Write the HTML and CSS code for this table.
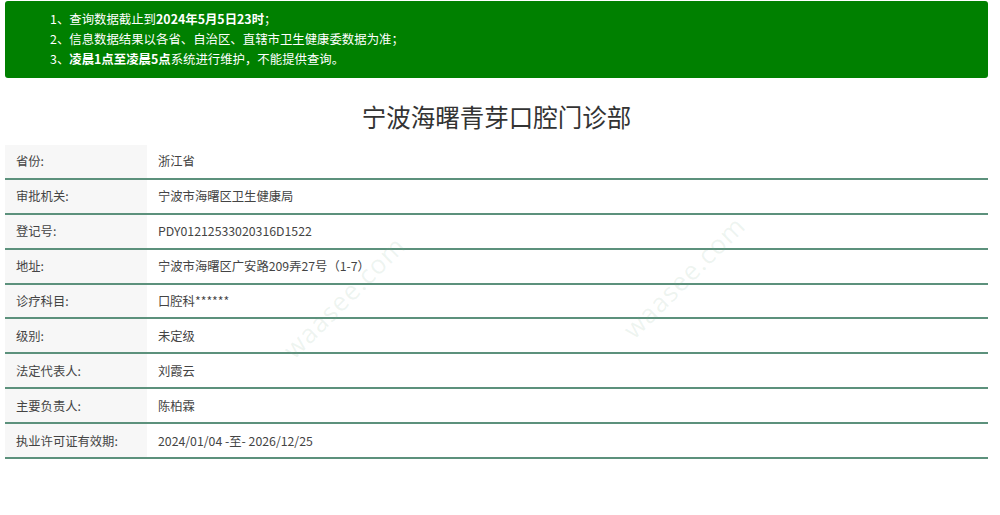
FILE: index.html
```html
<!DOCTYPE html>
<html lang="zh-CN">
<head>
<meta charset="utf-8">
<title>宁波海曙青芽口腔门诊部</title>
<link rel="stylesheet" href="styles.css">
</head>
<body>
<div class="page">
  <div class="notice">
    <p>1、查询数据截止到<b>2024年5月5日23时</b>；</p>
    <p>2、信息数据结果以各省、自治区、直辖市卫生健康委数据为准；</p>
    <p>3、<b>凌晨1点至凌晨5点</b>系统进行维护，不能提供查询。</p>
  </div>
  <h1 class="title">宁波海曙青芽口腔门诊部</h1>
  <div class="info">
    <div class="row"><div class="label">省份:</div><div class="value">浙江省</div></div>
    <div class="row"><div class="label">审批机关:</div><div class="value">宁波市海曙区卫生健康局</div></div>
    <div class="row"><div class="label">登记号:</div><div class="value">PDY01212533020316D1522</div></div>
    <div class="row"><div class="label">地址:</div><div class="value">宁波市海曙区广安路209弄27号（1-7）</div></div>
    <div class="row"><div class="label">诊疗科目:</div><div class="value">口腔科******</div></div>
    <div class="row"><div class="label">级别:</div><div class="value">未定级</div></div>
    <div class="row"><div class="label">法定代表人:</div><div class="value">刘霞云</div></div>
    <div class="row"><div class="label">主要负责人:</div><div class="value">陈柏霖</div></div>
    <div class="row"><div class="label">执业许可证有效期:</div><div class="value">2024/01/04 -至- 2026/12/25</div></div>
  </div>
  <div class="wm w4">waasee.com</div>
  <div class="wm w5">waasee.com</div>
</div>
</body>
</html>
```
FILE: styles.css
```css
* { box-sizing: border-box; }
html, body { margin: 0; padding: 0; background: #fff; }
body {
  font-family: "Noto Sans CJK SC", "Noto Sans", "Open Sans", sans-serif;
  color: #333;
  overflow: hidden;
}
.page {
  position: relative;
  width: 1000px;
  height: 515px;
  overflow: hidden;
  padding: 1px 12px 0 5px;
}
.notice {
  background: #008000;
  border-radius: 3px;
  color: #fff;
  padding: 8px 0 9px 45px;
  height: 77px;
  font-size: 12.4px;
}
.notice p {
  margin: 0;
  line-height: 20px;
}
.notice b { font-weight: 700; }
.title {
  margin: 0;
  padding: 22px 0 12px;
  text-align: center;
  font-size: 24.5px;
  font-weight: 400;
  line-height: 33px;
  color: #333;
}
.info {
  display: flex;
  flex-direction: column;
  width: 983px;
}
.row {
  display: flex;
  height: 34.9px;
  border-bottom: 2px solid #5c917c;
  font-size: 12.3px;
  color: #444;
}
.label {
  width: 142px;
  background: #f7f7f7;
  padding-left: 11px;
  display: flex;
  align-items: center;
}
.value {
  flex: 1;
  padding-left: 11px;
  display: flex;
  align-items: center;
}
.wm {
  position: absolute;
  font-family: "Open Sans", "Noto Sans", sans-serif;
  font-size: 26px;
  color: rgba(120, 170, 140, 0.13);
  transform: rotate(-45deg);
  transform-origin: left bottom;
  white-space: nowrap;
  pointer-events: none;
  letter-spacing: 1px;
}
.w4 { left: 640px; top: 310px; }
.w5 { left: 300px; top: 330px; }
```
